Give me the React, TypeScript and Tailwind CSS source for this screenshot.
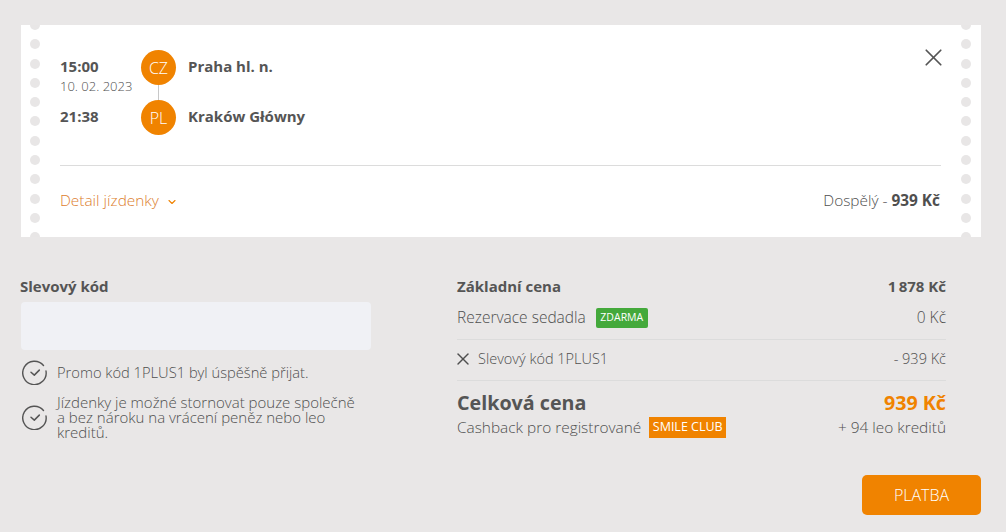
import { ChevronDown, X } from "lucide-react";

const font = "font-['Open_Sans','Liberation_Sans',sans-serif]";

function Holes({ side }: { side: "left" | "right" }) {
  const holes = Array.from({ length: 13 });
  return (
    <div
      className={`absolute top-[-5px] flex h-[222px] flex-col gap-[9.3px] overflow-hidden ${
        side === "left" ? "left-[9px]" : "right-[10px]"
      }`}
    >
      {holes.map((_, i) => (
        <div key={i} className="h-[10px] w-[10px] shrink-0 rounded-full bg-[#e8e6e6]" />
      ))}
    </div>
  );
}

function CheckRow({ children }: { children: React.ReactNode }) {
  return (
    <div className="flex items-center">
      <svg width="25" height="25" viewBox="0 0 25 25" fill="none" stroke="#555" className="ml-px shrink-0">
        <path d="M21.5 5.5A11.7 11.7 0 1 0 24 11" strokeWidth="1.4" strokeLinecap="round" />
        <path d="M9 12.3l3.3 2.8 5-5" strokeWidth="1.5" strokeLinecap="round" strokeLinejoin="round" />
      </svg>
      <div className="ml-[10px] leading-[15px] font-light text-[#4f4f4f]">{children}</div>
    </div>
  );
}

export default function App() {
  return (
    <div className={`h-[532px] w-[1006px] overflow-hidden bg-[#e9e7e7] px-[21px] pt-[25px] ${font}`}>
      <div className="relative h-[212px] w-[960px] overflow-hidden bg-white pl-[39px] pr-[40px] pt-[25px]">
        <Holes side="left" />
        <Holes side="right" />

        <div className="flex">
          <div className="w-[81px] text-[#555]">
            <div className="mt-[6px] text-[15px] leading-[20px] font-bold">15:00</div>
            <div className="mt-px text-[13px] leading-[19px] font-light text-[#4f4f4f]">10. 02. 2023</div>
            <div className="mt-[10px] text-[15px] leading-[20px] font-bold">21:38</div>
          </div>
          <div className="flex flex-col items-center">
            <div className="flex h-[35px] w-[35px] items-center justify-center rounded-full bg-[#f08300] text-[16px] font-light text-white">
              CZ
            </div>
            <div className="h-[15px] w-px bg-[#c8c8c8]" />
            <div className="flex h-[35px] w-[35px] items-center justify-center rounded-full bg-[#f08300] text-[16px] font-light text-white">
              PL
            </div>
          </div>
          <div className="ml-[12px] text-[15px] leading-[20px] font-bold text-[#555]">
            <div className="mt-[6px]">Praha hl. n.</div>
            <div className="mt-[30px]">Kraków Główny</div>
          </div>
          <X size={29} strokeWidth={1.4} className="ml-auto mr-[-7px] mt-[-7px] text-[#555]" />
        </div>

        <div className="mt-[30px] h-px bg-[#dcdcdc]" />

        <div className="mt-[25px] flex items-center justify-between">
          <div className="flex items-center text-[15.4px] leading-[20px] font-light text-[#dd8030]">
            Detail jízdenky
            <ChevronDown size={12} strokeWidth={2.2} className="ml-[7px] mt-[2px] text-[#f08300]" />
          </div>
          <div className="mr-px text-[15.4px] leading-[20px] font-light text-[#4f4f4f]">
            Dospělý - <span className="font-bold">939 Kč</span>
          </div>
        </div>
      </div>

      <div className="mt-[39px] flex">
        <div className="w-[350px] shrink-0">
          <div className="ml-[-1px] text-[15px] leading-[20px] font-bold text-[#555]">Slevový kód</div>
          <div className="mt-[6px] h-[48px] rounded-[4px] bg-[#f0f1f5]" />
          <div className="mt-[10px] flex w-[342px] flex-col gap-[10px]">
            <CheckRow>
              <span className="text-[14.7px]">Promo kód 1PLUS1 byl úspěšně přijat.</span>
            </CheckRow>
            <CheckRow>
              <span className="text-[15px]">
                Jízdenky je možné stornovat pouze společně
                <br />
                a bez nároku na vrácení peněz nebo leo
                <br />
                kreditů.
              </span>
            </CheckRow>
          </div>
        </div>

        <div className="ml-[86px] flex w-[524px] flex-col">
          <div className="w-[489px] text-[#4f4f4f]">
            <div className="flex items-center justify-between text-[15px] leading-[20px] font-bold text-[#555]">
              <span>Základní cena</span>
              <span>1&#8201;878 Kč</span>
            </div>
            <div className="mt-[12px] flex h-[20px] items-center justify-between text-[15.5px] font-light">
              <div className="flex items-center">
                Rezervace sedadla
                <span className="ml-[10px] flex h-[20px] w-[52px] items-center justify-center rounded-[2px] bg-[#44a93b] text-[10.5px] font-medium text-white">
                  ZDARMA
                </span>
              </div>
              <span>0 Kč</span>
            </div>
            <div className="mt-[11px] border-t border-[#dcdcdc]" />
            <div className="mt-[9px] flex h-[20px] items-center justify-between text-[14.5px] font-light">
              <div className="flex items-center">
                <X size={20} strokeWidth={1.7} className="ml-[-4px] mr-[5px]" />
                Slevový kód 1PLUS1
              </div>
              <span>- 939 Kč</span>
            </div>
            <div className="mt-[11px] border-t border-[#dcdcdc]" />
            <div className="mt-[9px] flex items-center justify-between text-[19.7px] leading-[26px] font-bold text-[#555]">
              <span>Celková cena</span>
              <span className="text-[#f08300]">939 Kč</span>
            </div>
            <div className="mt-[1px] flex h-[21px] items-center justify-between text-[15.4px] font-light">
              <div className="flex items-center">
                Cashback pro registrované
                <span className="ml-[8px] flex h-[21px] w-[77px] items-center justify-center bg-[#f08300] text-[12.5px] font-normal text-white">
                  SMILE CLUB
                </span>
              </div>
              <span>+ 94 leo kreditů</span>
            </div>
          </div>
          <button className="mt-[37px] h-[40px] w-[119px] self-end rounded-[5px] bg-[#f08300] text-[16px] font-light text-white">
            PLATBA
          </button>
        </div>
      </div>
    </div>
  );
}
